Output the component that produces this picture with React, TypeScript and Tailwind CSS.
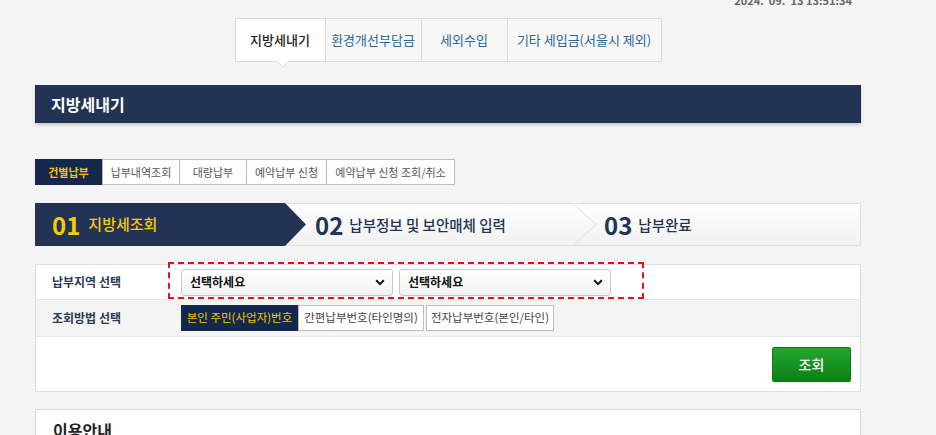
const FONT = "font-['Noto_Sans_CJK_KR','Noto_Sans',sans-serif]";

const topTabs = [
  { label: '지방세내기', w: 'w-[89px]', active: true },
  { label: '환경개선부담금', w: 'w-[96px]' },
  { label: '세외수입', w: 'w-[86px]' },
  { label: '기타 세입금(서울시 제외)', w: 'w-[154px]' },
];

const subTabs = [
  { label: '건별납부', w: 'w-[67px]', active: true },
  { label: '납부내역조회', w: 'w-[78px]' },
  { label: '대량납부', w: 'w-[67px]' },
  { label: '예약납부 신청', w: 'w-[80px]' },
  { label: '예약납부 신청 조회/취소', w: 'w-[128px]' },
];

function Chevron() {
  return (
    <svg width="10" height="7" viewBox="0 0 10 7" className="shrink-0">
      <path d="M1.2 1.3 5 5.1 8.8 1.3" fill="none" stroke="#111" strokeWidth="2" />
    </svg>
  );
}

function SelectBox() {
  return (
    <div className="flex h-[27px] w-[212px] items-center justify-between rounded-[3px] border border-[#c9c9c9] bg-gradient-to-b from-white to-[#f3f3f3] pl-[8px] pr-[7px]">
      <span className="text-[12px] font-bold text-[#111]">선택하세요</span>
      <Chevron />
    </div>
  );
}

export default function App() {
  return (
    <div className={`${FONT} relative h-[435px] w-[936px] overflow-hidden bg-[#f4f4f4]`}>
      <div className="ml-[35px] w-[826px]">
        {/* date */}
        <div className="-mt-[7px] flex justify-end pr-[9px] text-[11px] font-bold leading-[14px] text-[#666]">
          2024.&nbsp; 09.&nbsp; 13 13:51:34
        </div>

        {/* top tabs */}
        <div className="mt-[11px] flex justify-center">
          <div className="flex h-[44px] border border-[#dcdcdc]">
            {topTabs.map((t, i) => (
              <div
                key={t.label}
                className={`relative flex items-center justify-center text-[13px] ${t.w} ${
                  i > 0 ? 'border-l border-[#dcdcdc]' : ''
                } ${t.active ? 'bg-white font-medium text-[#222]' : 'bg-[#f7f7f7] text-[#2d6794]'}`}
              >
                {t.label}
                {t.active && (
                  <svg width="12" height="7" viewBox="0 0 12 7" className="absolute -bottom-[7px] left-[41px]">
                    <path d="M0 0 6 6 12 0" fill="#fff" stroke="#dcdcdc" />
                  </svg>
                )}
              </div>
            ))}
          </div>
        </div>

        {/* header bar */}
        <div className="mt-[23px] flex h-[38px] items-center bg-[#223354] pl-[16px] text-[16px] font-bold text-white shadow-[0_2px_3px_rgba(0,0,0,0.18)]">
          지방세내기
        </div>

        {/* sub tabs */}
        <div className="mt-[36px] flex h-[26px]">
          {subTabs.map((t, i) => (
            <div
              key={t.label}
              className={`flex items-center justify-center text-[11px] ${t.w} ${
                t.active
                  ? 'bg-[#14284b] font-bold text-[#f4c400]'
                  : `border border-[#bdbdbd] bg-white text-[#555] ${i > 1 ? 'border-l-0' : ''}`
              }`}
            >
              {t.label}
            </div>
          ))}
        </div>

        {/* steps */}
        <div className="mt-[18px] flex h-[43px] border border-[#e0e0e0] bg-gradient-to-b from-white to-[#f1f1f1]">
          <div className="-m-px flex h-[43px] w-[271px] shrink-0 items-center bg-[#223354] pl-[17px] [clip-path:polygon(0_0,250px_0,100%_50%,250px_100%,0_100%)]">
            <span className="text-[24px] font-bold leading-none text-[#f6cd00]">01</span>
            <span className="ml-[8px] text-[15px] font-medium text-[#f6cd00]">지방세조회</span>
          </div>
          <div className="relative flex w-[292px] shrink-0 items-center pl-[10px]">
            <span className="text-[24px] font-bold leading-none text-[#223354]">02</span>
            <span className="ml-[6px] text-[14.5px] font-medium text-[#223354]">납부정보 및 보안매체 입력</span>
            <svg width="25" height="43" viewBox="0 0 25 43" className="absolute -top-px right-0">
              <path d="M0.5 0 24 21.5 0.5 43" fill="none" stroke="#dedede" />
            </svg>
          </div>
          <div className="flex items-center pl-[7px]">
            <span className="text-[24px] font-bold leading-none text-[#223354]">03</span>
            <span className="ml-[6px] text-[14.5px] font-medium text-[#223354]">납부완료</span>
          </div>
        </div>

        {/* form */}
        <div className="relative mt-[18px] border border-[#dedede] bg-white">
          <div className="flex h-[34px] items-center">
            <div className="w-[145px] shrink-0 pl-[16px] text-[12px] font-bold text-[#2b3a55]">납부지역 선택</div>
            <div className="flex gap-[6px]">
              <SelectBox />
              <SelectBox />
            </div>
          </div>
          <div className="flex h-[38px] items-center border-y border-[#e6e6e6] bg-[#f4f4f4]">
            <div className="w-[145px] shrink-0 pl-[16px] text-[12px] font-bold text-[#2b3a55]">조회방법 선택</div>
            <div className="flex h-[26px] text-[11.5px]">
              <div className="flex w-[117px] items-center justify-center bg-[#14284b] text-[#f4c400]">본인 주민(사업자)번호</div>
              <div className="flex w-[126px] items-center justify-center border border-[#bdbdbd] bg-white text-[#444]">간편납부번호(타인명의)</div>
              <div className="ml-[2px] flex w-[128px] items-center justify-center border border-[#bdbdbd] bg-white text-[#444]">전자납부번호(본인/타인)</div>
            </div>
          </div>
          <div className="flex h-[54px] items-center justify-end pr-[9px]">
            <button className="flex h-[35px] w-[79px] items-center justify-center rounded-[2px] border border-[#0d7d17] bg-gradient-to-b from-[#25a530] to-[#0a7f12] text-[14px] font-medium text-white">
              조회
            </button>
          </div>
          <div className="absolute left-[132px] top-[-3px] h-[37px] w-[476px] border-2 border-dashed border-[#e8101a]" />
        </div>

        {/* usage guide */}
        <div className="mt-[17px] h-[60px] border border-[#dedede] bg-white pl-[17px] pt-[8px] text-[16px] font-bold text-[#222]">
          이용안내
        </div>
      </div>
    </div>
  );
}
